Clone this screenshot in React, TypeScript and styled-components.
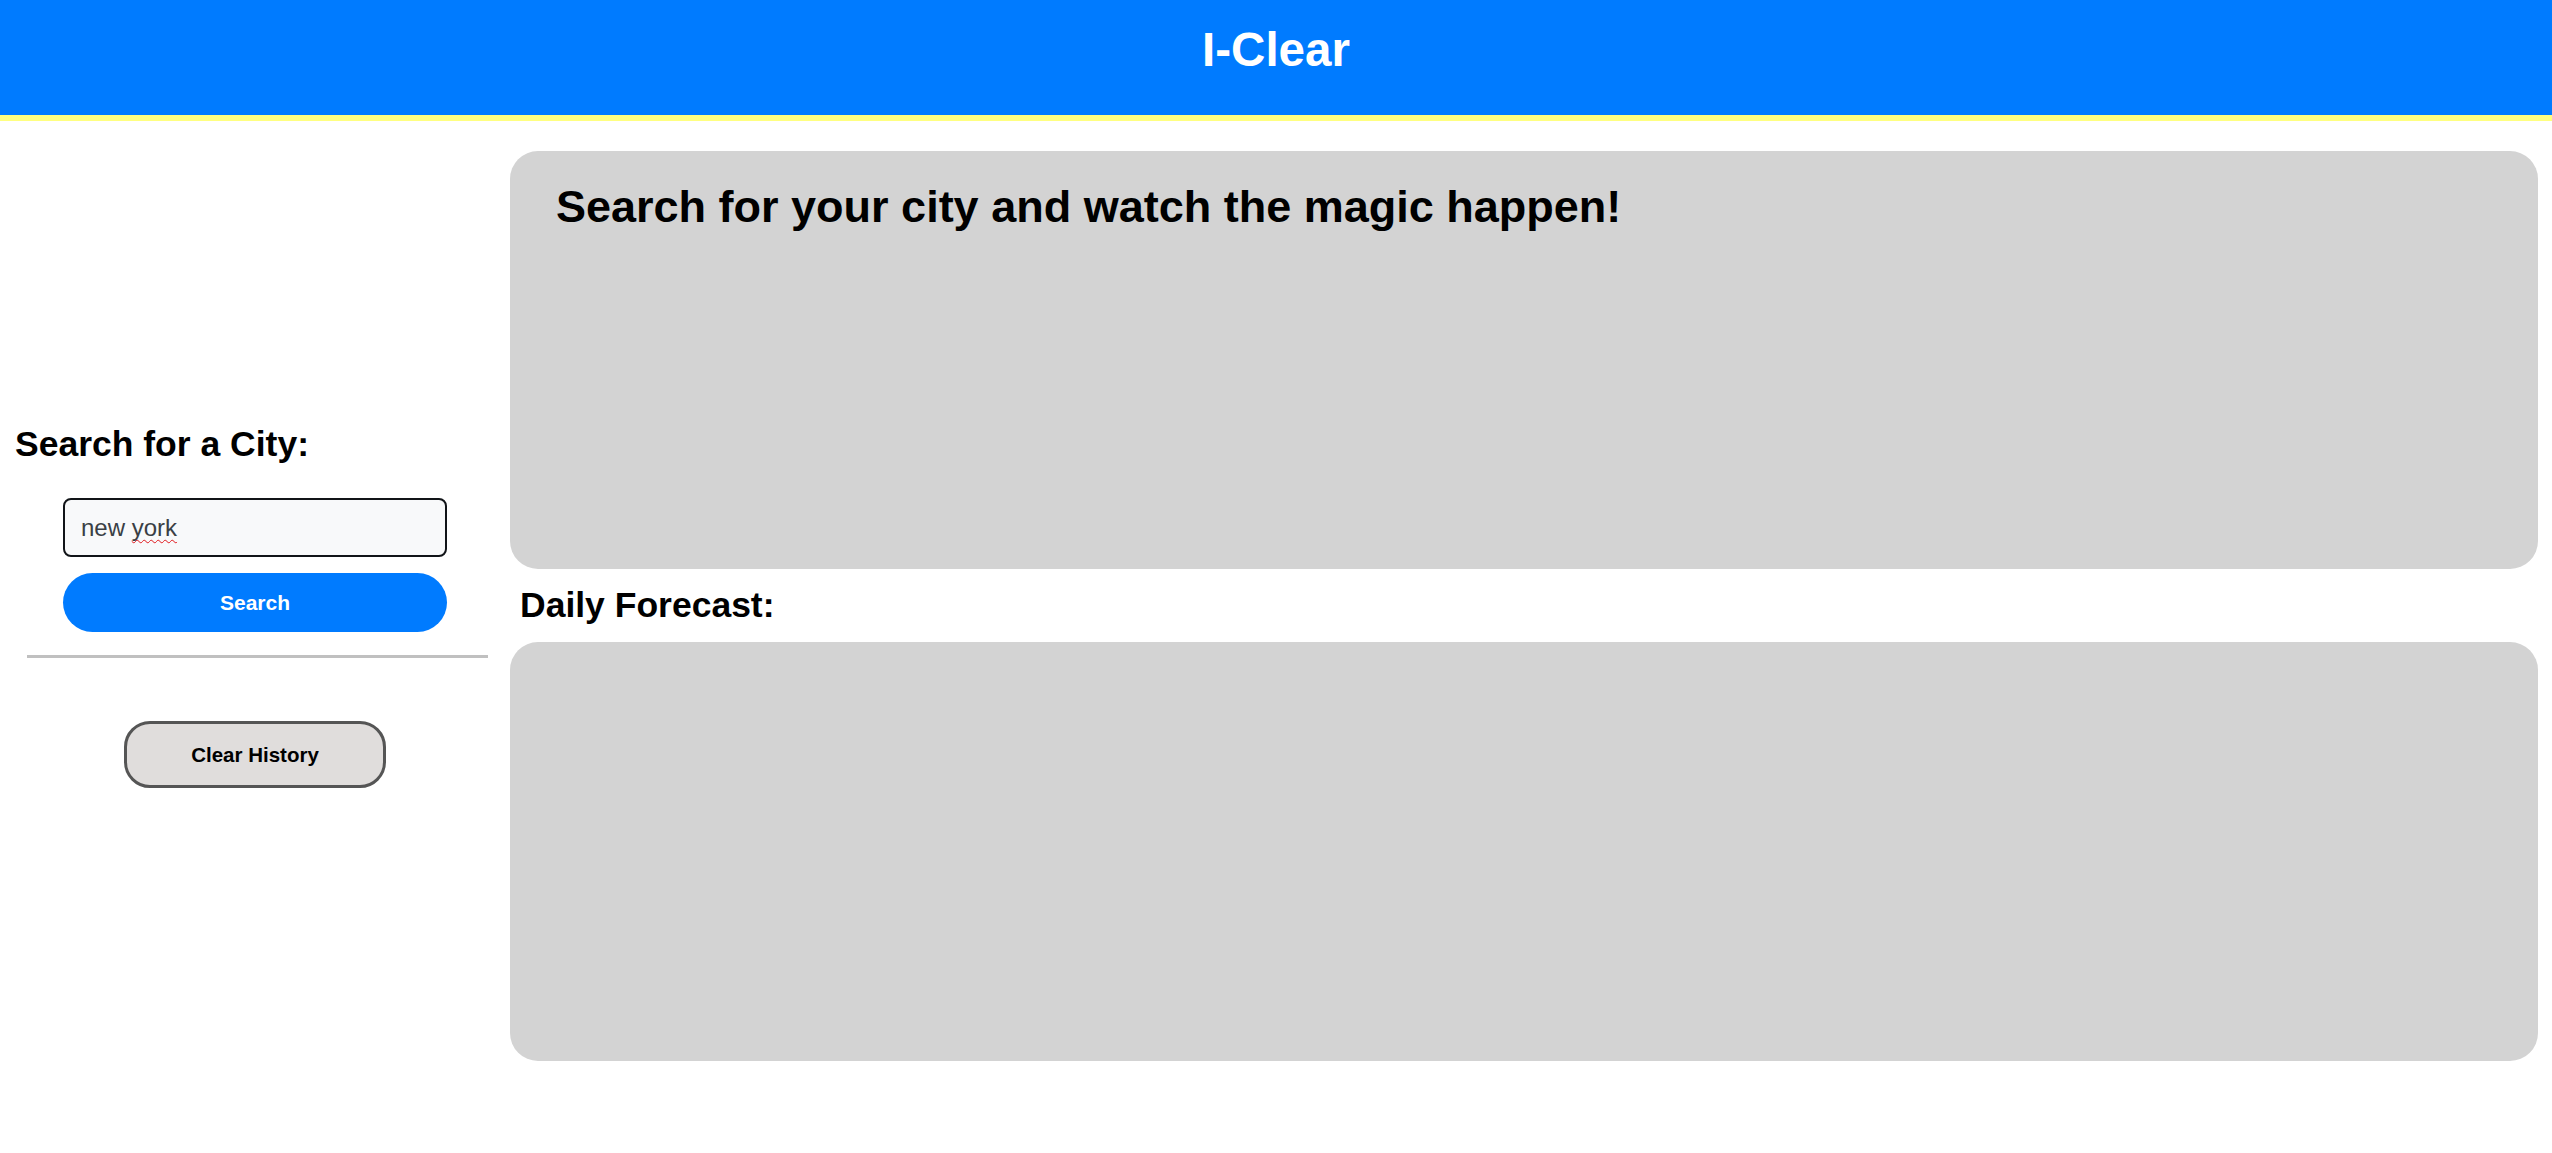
import React from "react";
import styled, { createGlobalStyle } from "styled-components";

const GlobalStyle = createGlobalStyle`
  html, body {
    margin: 0;
    padding: 0;
    background: #ffffff;
    font-family: "Liberation Sans", Arial, sans-serif;
    color: #000000;
  }
  * { box-sizing: border-box; }
`;

const Header = styled.header`
  height: 121px;
  background: #007bff;
  border-bottom: 6px solid #ffff80;
  display: flex;
  justify-content: center;
  align-items: flex-start;
  padding-top: 22px;
`;

const Title = styled.h1`
  margin: 0;
  font-size: 47.5px;
  font-weight: 700;
  line-height: normal;
  color: #ffffff;
`;

const Body = styled.div`
  display: flex;
  align-items: stretch;
  padding: 30px 14px 0 0;
`;

const Sidebar = styled.aside`
  width: 510px;
  flex: 0 0 510px;
  display: flex;
  flex-direction: column;
  align-self: center;
`;

const SideHeading = styled.h2`
  margin: 0 0 33px 0;
  padding-left: 15px;
  font-size: 35.5px;
  font-weight: 700;
  line-height: normal;
`;

const Form = styled.form`
  display: flex;
  flex-direction: column;
  align-items: center;
  gap: 16px;
`;

const InputWrap = styled.div`
  position: relative;
  width: 384px;
  height: 59px;
`;

const CityInput = styled.input`
  width: 100%;
  height: 100%;
  border: 2px solid #111418;
  border-radius: 8px;
  background: #f8f9fa;
  padding: 0 16px;
  font-family: "Liberation Sans", Arial, sans-serif;
  font-size: 24px;
  color: #3a3f45;
  outline: none;
`;

const SpellMark = styled.span`
  position: absolute;
  top: 0;
  left: 68.7px;
  height: 59px;
  line-height: 59px;
  font-family: "Liberation Sans", Arial, sans-serif;
  font-size: 24px;
  color: transparent;
  text-decoration: underline wavy #e0191d;
  text-decoration-thickness: 1px;
  text-underline-offset: 3px;
  text-decoration-skip-ink: none;
  pointer-events: none;
`;

const SearchButton = styled.button`
  width: 384px;
  height: 59px;
  border: none;
  border-radius: 30px;
  background: #007bff;
  color: #ffffff;
  font-family: "Liberation Sans", Arial, sans-serif;
  font-size: 21px;
  font-weight: 700;
  cursor: pointer;
`;

const Divider = styled.hr`
  margin: 23px 22px 0 27px;
  border: none;
  height: 3px;
  background: #c0c0c0;
`;

const HistoryArea = styled.div`
  display: flex;
  justify-content: center;
  padding-top: 63px;
`;

const ClearButton = styled.button`
  width: 262px;
  height: 67px;
  border: 3px solid #555555;
  border-radius: 26px;
  background: #e0dddc;
  color: #000000;
  font-family: "Liberation Sans", Arial, sans-serif;
  font-size: 20.5px;
  font-weight: 700;
  cursor: pointer;
`;

const Main = styled.main`
  flex: 1;
  display: flex;
  flex-direction: column;
`;

const Card = styled.section<{ $height: number }>`
  height: ${(p) => p.$height}px;
  background: #d3d3d3;
  border-radius: 28px;
  padding: 30px 46px;
`;

const CardText = styled.h2`
  margin: 0;
  font-size: 45px;
  font-weight: 700;
  line-height: normal;
`;

const ForecastHeading = styled.h2`
  margin: 16px 0 16px 10px;
  font-size: 35.5px;
  font-weight: 700;
  line-height: normal;
`;

export default function App() {
  return (
    <>
      <GlobalStyle />
      <Header>
        <Title>I-Clear</Title>
      </Header>
      <Body>
        <Sidebar>
          <SideHeading>Search for a City:</SideHeading>
          <Form onSubmit={(e) => e.preventDefault()}>
            <InputWrap>
              <CityInput type="text" defaultValue="new york" spellCheck={false} />
              <SpellMark aria-hidden="true">york</SpellMark>
            </InputWrap>
            <SearchButton type="submit">Search</SearchButton>
          </Form>
          <Divider />
          <HistoryArea>
            <ClearButton type="button">Clear History</ClearButton>
          </HistoryArea>
        </Sidebar>
        <Main>
          <Card $height={418}>
            <CardText>Search for your city and watch the magic happen!</CardText>
          </Card>
          <ForecastHeading>Daily Forecast:</ForecastHeading>
          <Card $height={419} />
        </Main>
      </Body>
    </>
  );
}
